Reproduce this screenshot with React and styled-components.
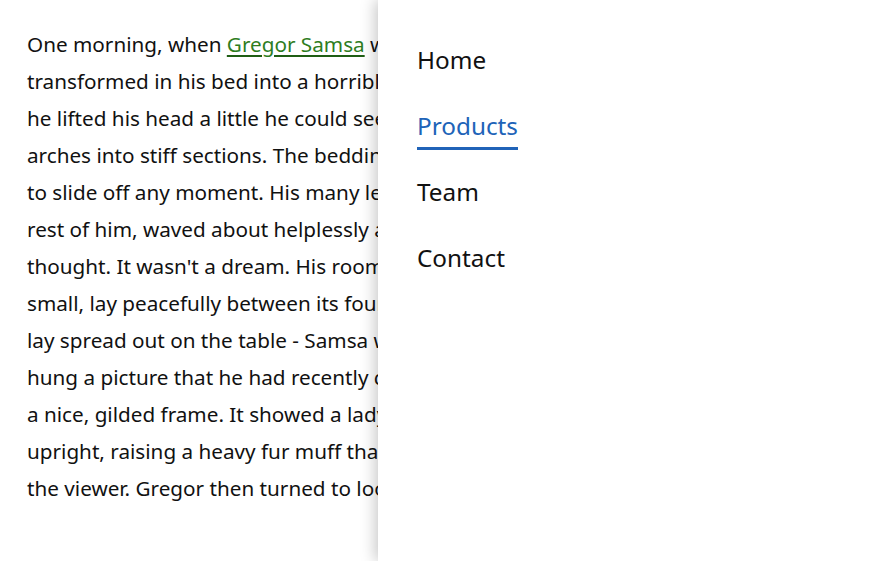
import React from "react";
import styled, { createGlobalStyle } from "styled-components";

const Global = createGlobalStyle`
  html, body { margin: 0; padding: 0; background: #fff; }
  body { font-family: "Noto Sans", "Open Sans", sans-serif; color: #111; }
`;

const Page = styled.div`
  width: 875px;
  height: 561px;
  overflow: hidden;
  position: relative;
`;

const Article = styled.main`
  width: 378px;
  box-sizing: border-box;
  overflow: hidden;
  padding: 26px 0 24px 27px;
`;

const Paragraph = styled.p`
  margin: 0;
  font-size: 20.7px;
  line-height: 37px;
  white-space: nowrap;
`;

const Link = styled.a`
  color: #2e7d1e;
  text-decoration: underline;
  text-decoration-color: #1f5e14;
  text-underline-offset: 3px;
`;

const Drawer = styled.nav`
  position: absolute;
  top: 0;
  right: 0;
  bottom: 0;
  width: 497px;
  background: #fff;
  box-shadow: -3px 0 14px rgba(0, 0, 0, 0.22);
  padding: 38px 39px;
  box-sizing: border-box;
`;

const Menu = styled.ul`
  list-style: none;
  margin: 0;
  padding: 0;
  display: flex;
  flex-direction: column;
  align-items: flex-start;
  gap: 20px;
`;

const MenuLink = styled.a`
  display: inline-block;
  font-size: 24.3px;
  line-height: 43px;
  color: ${(p) => (p.$active ? "#2063b8" : "#111")};
  text-decoration: none;
  border-bottom: 3px solid ${(p) => (p.$active ? "#2063b8" : "transparent")};
`;

const lines = [
  "transformed in his bed into a horrible vermin. He lay on his armour-like back, and if",
  "he lifted his head a little he could see his brown belly, slightly domed and divided by",
  "arches into stiff sections. The bedding was hardly able to cover it and seemed ready",
  "to slide off any moment. His many legs, pitifully thin compared with the size of the",
  "rest of him, waved about helplessly as he looked. \"What's happened to me?\" he",
  "thought. It wasn't a dream. His room, a proper human room although a little too",
  "small, lay peacefully between its four familiar walls. A collection of textile samples",
  "lay spread out on the table - Samsa was a travelling salesman - and above it there",
  "hung a picture that he had recently cut out of an illustrated magazine and housed in",
  "a nice, gilded frame. It showed a lady fitted out with a fur hat and fur boa who sat",
  "upright, raising a heavy fur muff that covered the whole of her lower arm towards",
  "the viewer. Gregor then turned to look out the window at the dull weather.",
];

export default function App() {
  return (
    <Page>
      <Global />
      <Article>
        <Paragraph>
          One morning, when <Link href="#">Gregor Samsa</Link> woke from troubled dreams, he found himself
          {lines.map((l, i) => (
            <React.Fragment key={i}>
              <br />
              {l}
            </React.Fragment>
          ))}
        </Paragraph>
      </Article>
      <Drawer>
        <Menu>
          {["Home", "Products", "Team", "Contact"].map((t) => (
            <li key={t}>
              <MenuLink href="#" $active={t === "Products"}>
                {t}
              </MenuLink>
            </li>
          ))}
        </Menu>
      </Drawer>
    </Page>
  );
}
